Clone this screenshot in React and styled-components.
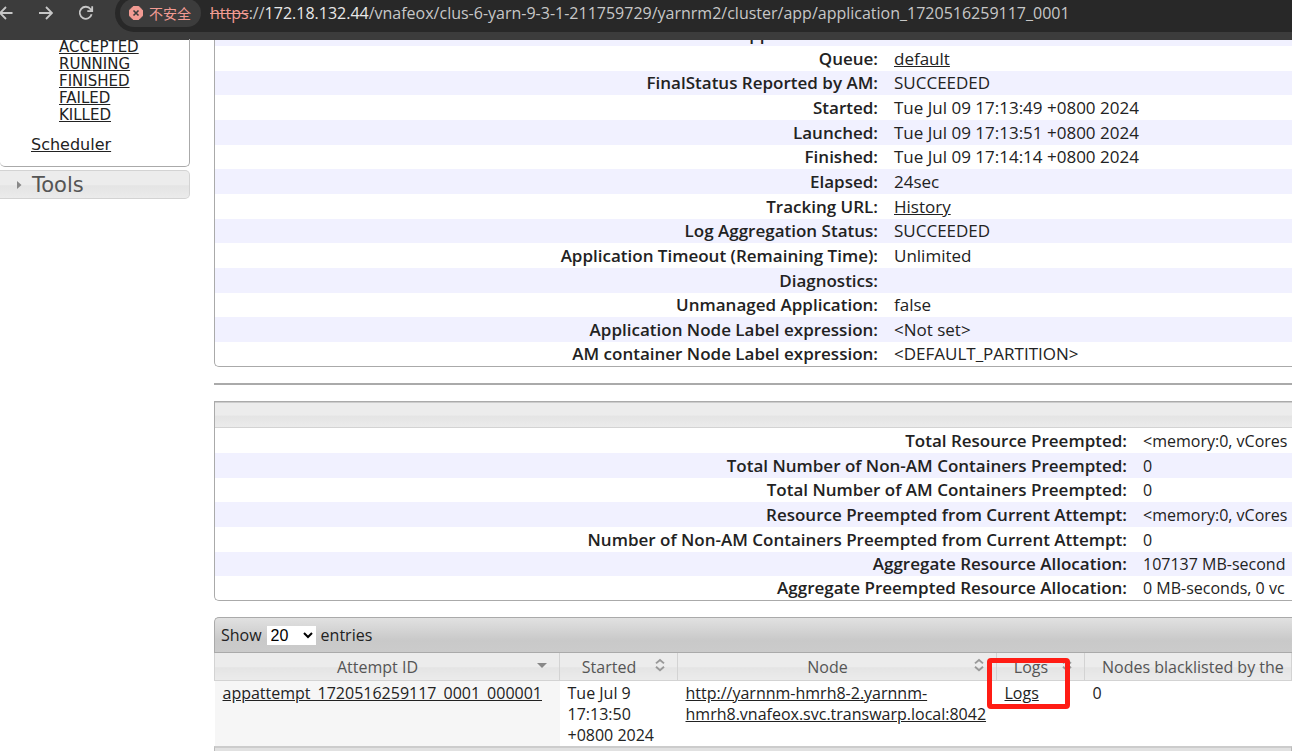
import React from 'react';
import styled, { createGlobalStyle } from 'styled-components';

const GlobalStyle = createGlobalStyle`
    * {
        box-sizing: border-box;
    }

    body {
        margin: 0;
        background: #fff;
        color: #222;
        font-family: 'Open Sans', 'Noto Sans', 'Noto Sans CJK SC', sans-serif;
        font-size: 16px;
    }
`;

// Styles
const Page = styled.div`
    display: flex;
    flex-direction: column;
    height: 100vh;
    overflow: hidden;
`;

const BrowserBar = styled.header`
    display: flex;
    flex: none;
    height: 40px;
    overflow: hidden;
    background: #3c3c3c;
`;

const NavButtons = styled.div`
    display: flex;
    flex: none;
    align-items: center;
    justify-content: space-between;
    width: 115px;
    height: 26px;
    padding-right: 21px;
`;

const NavButton = styled.button`
    display: flex;
    padding: 0;
    border: 0;
    background: none;
    color: #c7c7c7;
`;

const AddressBar = styled.div`
    display: flex;
    flex: 1;
    align-items: center;
    gap: 9px;
    height: 38px;
    margin-top: -6px;
    padding-left: 5px;
    border-radius: 19px 0 0 19px;
    background: #282828;
    color: #c7c7c7;
    white-space: nowrap;
`;

const SecurityChip = styled.button`
    display: flex;
    flex: none;
    align-items: center;
    gap: 6px;
    width: 81px;
    height: 28px;
    padding: 0 0 0 9px;
    border: 0;
    border-radius: 14px;
    background: #3c3c3c;
    color: #f29b93;
    font-family: 'Noto Sans CJK SC', sans-serif;
    font-size: 14px;
`;

const Url = styled.span`
    font-size: 16px;
`;

const Scheme = styled.s`
    color: #f29b93;
`;

const Host = styled.span`
    color: #e8e8e8;
`;

const Body = styled.div`
    display: flex;
    flex: 1;
    gap: 24px;
    min-height: 0;
`;

const Sidebar = styled.nav`
    flex: none;
    width: 190px;
    font-family: 'DejaVu Sans', sans-serif;
`;

const Menu = styled.div`
    height: 128px;
    margin-bottom: 3px;
    padding-left: 31px;
    border: 1px solid #aaa;
    border-width: 0 1px 1px 0;
    border-radius: 0 0 5px 5px;
`;

const States = styled.ul`
    margin: -1px 0 11px;
    padding: 0 0 0 28px;
    list-style: none;
    font-size: 15px;
    line-height: 17px;
`;

const Link = styled.a`
    color: #222;
    text-decoration: underline;
`;

const ToolsHeader = styled.button`
    display: flex;
    align-items: center;
    gap: 10px;
    width: 100%;
    height: 29px;
    padding: 0 0 0 16px;
    border: 1px solid #d3d3d3;
    border-left: 0;
    border-radius: 0 5px 5px 0;
    background: linear-gradient(#ececec 0 50%, #e4e4e4 55%, #ebebeb);
    color: #555;
    font-family: inherit;
    font-size: 21px;
`;

const Content = styled.main`
    flex: 1;
    min-width: 0;
    overflow: hidden;
`;

const Panel = styled.section`
    margin-top: ${({ $scrolled }) => ($scrolled ? '-20px' : '0')};
    border: 1px solid #aaa;
    border-right: 0;
    border-radius: 0 0 0 5px;
    overflow: hidden;
`;

const PanelHeader = styled.div`
    height: 26px;
    border-top: 1px solid #ccc;
    border-bottom: 1px solid #d3d3d3;
    background: linear-gradient(#ececec 0 50%, #e4e4e4 55%, #ebebeb);
`;

const InfoTable = styled.table`
    width: 100%;
    border-collapse: collapse;
    table-layout: fixed;
    line-height: 24px;
    white-space: nowrap;

    tr:nth-child(${({ $striped }) => $striped}) {
        background: #f1f1ff;
    }

    th {
        width: ${({ $labelWidth }) => $labelWidth};
        padding: 1px 7px 0 0;
        font-size: 17px;
        font-weight: 600;
        text-align: right;
    }

    td {
        padding: 1px 0 0 9px;
        font-size: ${({ $valueSize }) => $valueSize};
        overflow: hidden;
    }

    tr:nth-child(3n) > *,
    tr:last-child > * {
        padding-top: 0;
    }
`;

const Divider = styled.hr`
    height: 2px;
    margin: 16px 0;
    border: 0;
    background: #aaa;
`;

const Attempts = styled.section`
    margin-top: 16px;
`;

const Toolbar = styled.div`
    display: flex;
    align-items: center;
    height: 36px;
    padding-left: 6px;
    border: 1px solid #aaa;
    border-right: 0;
    border-radius: 5px 0 0 0;
    background: linear-gradient(#e1e1e1, #c9c9c9 65%, #cbcbcb);
`;

const LengthLabel = styled.label`
    display: flex;
    align-items: center;
    gap: 5px;
`;

const LengthSelect = styled.select`
    width: 49px;
    height: 19px;
    padding: 0;
    border: 0;
    background: #fff;
    color: #000;
    font-family: 'Liberation Sans', sans-serif;
    font-size: 16px;
`;

const AttemptTable = styled.table`
    width: 100%;
    border-collapse: collapse;
    table-layout: fixed;
    line-height: 22px;
    white-space: nowrap;

    th {
        height: 27px;
        padding: 2px 0 0;
        border: 1px solid #d3d3d3;
        border-top: 0;
        background: linear-gradient(#ececec 0 50%, #e4e4e4 55%, #ebebeb);
        color: #555;
        font-weight: 400;
    }

    td {
        height: 66px;
        padding: 2px 0 0 8px;
        vertical-align: top;
        line-height: 21px;
    }

    td:first-child {
        background: #f6f6f6;
    }
`;

const Column = styled.col`
    width: ${({ $width }) => $width};
`;

const HeaderCell = styled.div`
    position: relative;
    display: flex;
    align-items: center;
    justify-content: ${({ $start }) => ($start ? 'flex-start' : 'center')};
    padding: ${({ $start }) => ($start ? '0 0 0 17px' : '0 19px 0 0')};
    height: 22px;
`;

const SortMark = styled.span`
    position: absolute;
    top: 2px;
    right: 12px;
    display: flex;
`;

const Highlight = styled.span`
    position: absolute;
    z-index: 1;
    top: 2px;
    left: -10px;
    width: 83px;
    height: 51px;
    border: 5px solid #ff1c14;
    border-radius: 4px;
`;

const FooterBar = styled.div`
    height: 36px;
    border: 1px solid #bbb;
    border-top: 2px solid #ccc;
    background: #e1e1e1;
`;

// Icons
const Arrow = ({ back }) => (
    <svg width="14" height="14" viewBox="0 0 14 14" fill="none" stroke="currentColor" strokeWidth="1.8">
        <path d={back ? 'M12.5 7H0M6 1L0 7l6 6' : 'M0 7h12.5M7 1l6 6-6 6'} />
    </svg>
);

const Reload = () => (
    <svg width="16" height="16" viewBox="0 0 16 16" fill="none" stroke="currentColor" strokeWidth="1.8">
        <path d="M13.6 9.2A6 6 0 1 1 12.6 4.2L14 5.8M14.2 1.2v4.9H9.3" />
    </svg>
);

const Insecure = () => (
    <svg width="14" height="14" viewBox="0 0 14 14">
        <path d="M4.2 .5h5.6l3.7 3.7v5.6l-3.7 3.7H4.2L.5 9.8V4.2z" fill="#f29b93" stroke="#f29b93" strokeLinejoin="round" />
        <path d="M4.5 4.5l5 5M9.5 4.5l-5 5" stroke="#3c3c3c" strokeWidth="1.6" />
    </svg>
);

const ToolsArrow = () => (
    <svg width="6" height="8" viewBox="0 0 6 8">
        <path d="M1 0l4.5 4L1 8z" fill="#888" />
    </svg>
);

const SortBoth = () => (
    <svg width="10" height="14" viewBox="0 0 10 14" fill="none" stroke="#999" strokeWidth="1.9">
        <path d="M1 5.4l4-3.4 4 3.4M1 8.8l4 3.4 4-3.4" />
    </svg>
);

const SortDown = () => (
    <svg width="10" height="14" viewBox="0 0 10 14">
        <path d="M0 5h10L5 10z" fill="#888" />
    </svg>
);

const states = ['ACCEPTED', 'RUNNING', 'FINISHED', 'FAILED', 'KILLED'];

const overview = [
    { label: 'YarnApplicationState', value: '' },
    { label: 'Queue', value: 'default', link: true },
    { label: 'FinalStatus Reported by AM', value: 'SUCCEEDED' },
    { label: 'Started', value: 'Tue Jul 09 17:13:49 +0800 2024' },
    { label: 'Launched', value: 'Tue Jul 09 17:13:51 +0800 2024' },
    { label: 'Finished', value: 'Tue Jul 09 17:14:14 +0800 2024' },
    { label: 'Elapsed', value: '24sec' },
    { label: 'Tracking URL', value: 'History', link: true },
    { label: 'Log Aggregation Status', value: 'SUCCEEDED' },
    { label: 'Application Timeout (Remaining Time)', value: 'Unlimited' },
    { label: 'Diagnostics', value: '' },
    { label: 'Unmanaged Application', value: 'false' },
    { label: 'Application Node Label expression', value: '<Not set>' },
    { label: 'AM container Node Label expression', value: '<DEFAULT_PARTITION>' }
];

const metrics = [
    { label: 'Total Resource Preempted', value: '<memory:0, vCores' },
    { label: 'Total Number of Non-AM Containers Preempted', value: '0' },
    { label: 'Total Number of AM Containers Preempted', value: '0' },
    { label: 'Resource Preempted from Current Attempt', value: '<memory:0, vCores' },
    { label: 'Number of Non-AM Containers Preempted from Current Attempt', value: '0' },
    { label: 'Aggregate Resource Allocation', value: '107137 MB-second' },
    { label: 'Aggregate Preempted Resource Allocation', value: '0 MB-seconds, 0 vc' }
];

const Info = ({ rows, labelWidth, valueSize, striped }) => (
    <InfoTable $labelWidth={labelWidth} $valueSize={valueSize} $striped={striped}>
        <tbody>
            {rows.map(({ label, value, link }) => (
                <tr key={label}>
                    <th scope="row">{label}:</th>
                    <td>{link ? <Link href="#">{value}</Link> : value}</td>
                </tr>
            ))}
        </tbody>
    </InfoTable>
);

const App = () => (
    <Page>
        <GlobalStyle />
        <BrowserBar>
            <NavButtons>
                <NavButton aria-label="Back"><Arrow back /></NavButton>
                <NavButton aria-label="Forward"><Arrow /></NavButton>
                <NavButton aria-label="Reload"><Reload /></NavButton>
            </NavButtons>
            <AddressBar>
                <SecurityChip><Insecure />不安全</SecurityChip>
                <Url>
                    <Scheme>https</Scheme>://<Host>172.18.132.44</Host>
                    /vnafeox/clus-6-yarn-9-3-1-211759729/yarnrm2/cluster/app/application_1720516259117_0001
                </Url>
            </AddressBar>
        </BrowserBar>
        <Body>
            <Sidebar>
                <Menu>
                    <States>
                        {states.map(state => (
                            <li key={state}><Link href="#">{state}</Link></li>
                        ))}
                    </States>
                    <Link href="#">Scheduler</Link>
                </Menu>
                <ToolsHeader><ToolsArrow />Tools</ToolsHeader>
            </Sidebar>
            <Content>
                <Panel $scrolled>
                    <Info rows={overview} labelWidth="670px" valueSize="17px" striped="odd" />
                </Panel>
                <Divider />
                <Panel>
                    <PanelHeader />
                    <Info rows={metrics} labelWidth="919px" valueSize="16px" striped="even" />
                </Panel>
                <Attempts>
                    <Toolbar>
                        <LengthLabel>
                            Show
                            <LengthSelect defaultValue="20">
                                <option>20</option>
                                <option>40</option>
                                <option>60</option>
                            </LengthSelect>
                            entries
                        </LengthLabel>
                    </Toolbar>
                    <AttemptTable>
                        <colgroup>
                            <Column $width="345px" />
                            <Column $width="118px" />
                            <Column $width="319px" />
                            <Column $width="88px" />
                            <Column />
                        </colgroup>
                        <thead>
                            <tr>
                                <th><HeaderCell>Attempt ID<SortMark><SortDown /></SortMark></HeaderCell></th>
                                <th><HeaderCell>Started<SortMark><SortBoth /></SortMark></HeaderCell></th>
                                <th><HeaderCell>Node<SortMark><SortBoth /></SortMark></HeaderCell></th>
                                <th><HeaderCell>Logs<SortMark><SortBoth /></SortMark><Highlight /></HeaderCell></th>
                                <th><HeaderCell $start>Nodes blacklisted by the</HeaderCell></th>
                            </tr>
                        </thead>
                        <tbody>
                            <tr>
                                <td><Link href="#">appattempt_1720516259117_0001_000001</Link></td>
                                <td>Tue Jul 9<br />17:13:50<br />+0800 2024</td>
                                <td>
                                    <Link href="#">
                                        http://yarnnm-hmrh8-2.yarnnm-<br />hmrh8.vnafeox.svc.transwarp.local:8042
                                    </Link>
                                </td>
                                <td><Link href="#">Logs</Link></td>
                                <td>0</td>
                            </tr>
                        </tbody>
                    </AttemptTable>
                    <FooterBar />
                </Attempts>
            </Content>
        </Body>
    </Page>
);

export default App;
